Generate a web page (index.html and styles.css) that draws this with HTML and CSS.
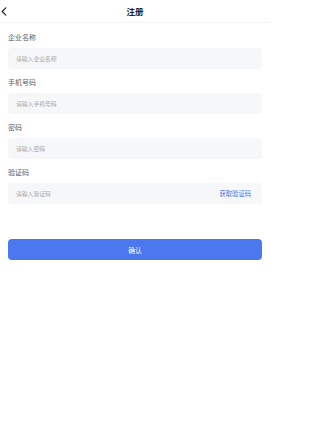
FILE: index.html
```html
<!DOCTYPE html>
<html lang="zh">
<head>
<meta charset="utf-8">
<link rel="stylesheet" href="styles.css">
</head>
<body>
<div class="page">
  <header class="nav">
    <span class="back"><svg width="6" height="9" viewBox="0 0 6 9"><path d="M4.8 0.8 L1.2 4.5 L4.8 8.2" fill="none" stroke="#222" stroke-width="1.2" stroke-linecap="round" stroke-linejoin="round"/></svg></span>
    <h1 class="title">注册</h1>
  </header>
  <form class="form">
    <div class="field">
      <div class="label">企业名称</div>
      <div class="input"><span class="ph">请输入企业名称</span></div>
    </div>
    <div class="field">
      <div class="label">手机号码</div>
      <div class="input"><span class="ph">请输入手机号码</span></div>
    </div>
    <div class="field">
      <div class="label">密码</div>
      <div class="input"><span class="ph">请输入密码</span></div>
    </div>
    <div class="field">
      <div class="label">验证码</div>
      <div class="input"><span class="ph">请输入验证码</span><span class="code">获取验证码</span></div>
    </div>
    <div class="submit">确认</div>
  </form>
</div>
</body>
</html>
```
FILE: styles.css
```css
* { box-sizing: border-box; margin: 0; padding: 0; }
html, body { background: #fff; }
body {
  font-family: "Noto Sans CJK SC", "Noto Sans", sans-serif;
  color: #333;
}
.page { width: 270px; height: 422px; }
.nav {
  position: relative;
  height: 23px;
  border-bottom: 1px solid #f1f2f4;
  display: flex;
  align-items: center;
  justify-content: center;
}
.back {
  position: absolute;
  left: 1px;
  top: 7px;
  display: flex;
}
.title {
  font-size: 8.5px;
  font-weight: 700;
  color: #222;
  line-height: 12px;
}
.form {
  padding: 8px 8px 0 8px;
  display: flex;
  flex-direction: column;
}
.field {
  display: flex;
  flex-direction: column;
  gap: 4px;
  margin-bottom: 7px;
}
.label {
  font-size: 7px;
  line-height: 13px;
  color: #5a5d63;
}
.input {
  height: 21px;
  background: #f6f7f9;
  border-radius: 4px;
  display: flex;
  align-items: center;
  justify-content: space-between;
  padding: 0 11px 0 8px;
}
.ph {
  font-size: 5.8px;
  color: #a6a9ae;
}
.code {
  font-size: 6.3px;
  color: #4a76e6;
}
.submit {
  margin-top: 28px;
  height: 21px;
  background: #4b78ee;
  border-radius: 4px;
  color: #fff;
  font-size: 6.8px;
  display: flex;
  align-items: center;
  justify-content: center;
}
```
